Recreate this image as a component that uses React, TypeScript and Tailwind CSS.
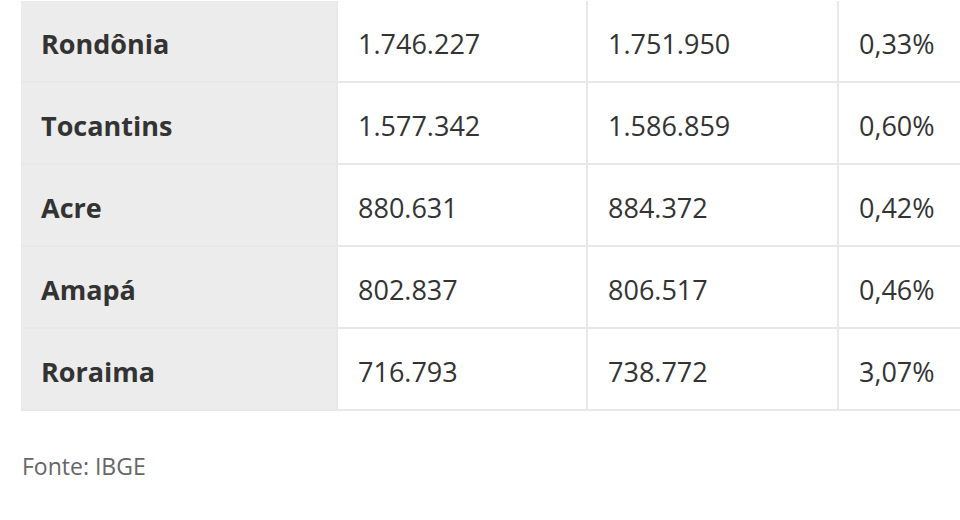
import React from "react";

const rows = [
  { state: "Rondônia", a: "1.746.227", b: "1.751.950", pct: "0,33%" },
  { state: "Tocantins", a: "1.577.342", b: "1.586.859", pct: "0,60%" },
  { state: "Acre", a: "880.631", b: "884.372", pct: "0,42%" },
  { state: "Amapá", a: "802.837", b: "806.517", pct: "0,46%" },
  { state: "Roraima", a: "716.793", b: "738.772", pct: "3,07%" },
];

const App = () => {
  return (
    <div
      className="w-[960px] h-[520px] bg-white overflow-hidden pl-[21px] pt-px text-[#333]"
      style={{ fontFamily: '"Open Sans", sans-serif' }}
    >
      <div className="w-[1000px]">
        {rows.map((r) => (
          <div
            key={r.state}
            className="flex h-[82px] border-b-2 border-[#e8e8e8]"
          >
            <div className="w-[315px] bg-[#ececec] flex items-center pt-[6px] pl-[20px] text-[27px] font-bold">
              {r.state}
            </div>
            <div className="w-[250px] border-l-2 border-[#e8e8e8] flex items-center pt-[6px] pl-[20px] text-[27px]">
              {r.a}
            </div>
            <div className="w-[251px] border-l-2 border-[#e8e8e8] flex items-center pt-[6px] pl-[20px] text-[27px]">
              {r.b}
            </div>
            <div className="flex-1 border-l-2 border-[#e8e8e8] flex items-center pt-[6px] pl-[20px] text-[27px]">
              {r.pct}
            </div>
          </div>
        ))}
      </div>
      <p className="mt-[38px] text-[23px] text-[#666] pl-px">Fonte: IBGE</p>
    </div>
  );
};

export default App;
